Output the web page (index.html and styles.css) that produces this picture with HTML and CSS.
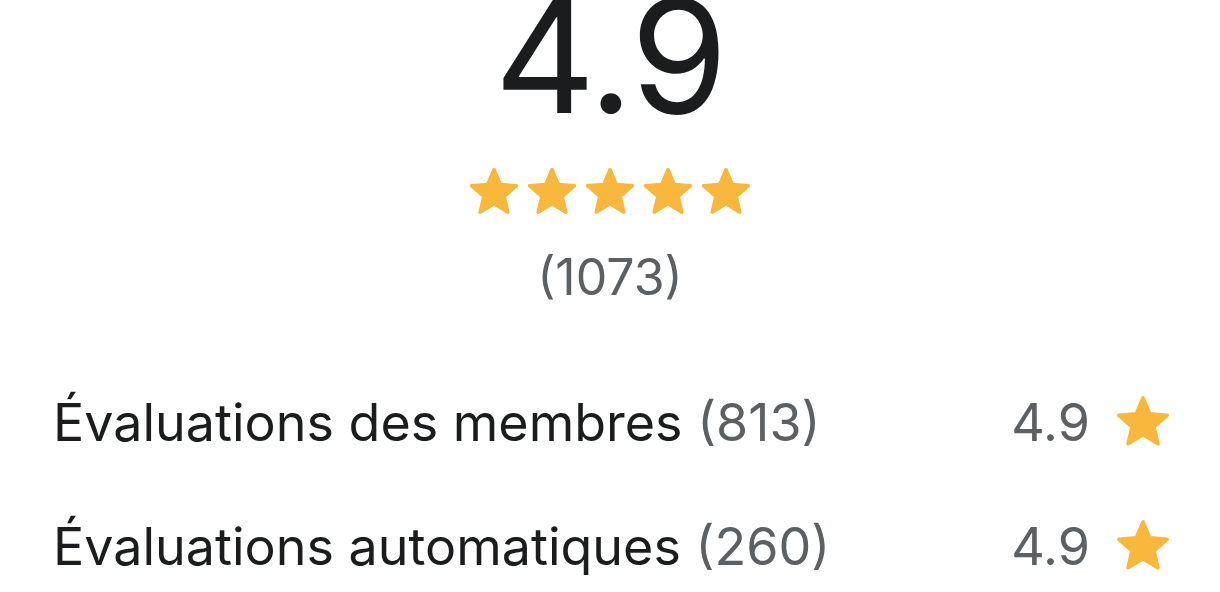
FILE: index.html
```html
<!DOCTYPE html>
<html lang="fr">
<head>
  <meta charset="UTF-8" />
  <meta name="viewport" content="width=device-width, initial-scale=1" />
  <title>Évaluations</title>
  <link rel="stylesheet" href="styles.css">
</head>
<body>

<div class="summary">
  <div class="score">4.9</div>
  <div class="stars">
    <svg class="star" viewBox="0 0 24 24"><path d="M12 17.27L18.18 21l-1.64-7.03L22 9.24l-7.19-.61L12 2 9.19 8.63 2 9.24l5.46 4.73L5.82 21z"/></svg>
    <svg class="star" viewBox="0 0 24 24"><path d="M12 17.27L18.18 21l-1.64-7.03L22 9.24l-7.19-.61L12 2 9.19 8.63 2 9.24l5.46 4.73L5.82 21z"/></svg>
    <svg class="star" viewBox="0 0 24 24"><path d="M12 17.27L18.18 21l-1.64-7.03L22 9.24l-7.19-.61L12 2 9.19 8.63 2 9.24l5.46 4.73L5.82 21z"/></svg>
    <svg class="star" viewBox="0 0 24 24"><path d="M12 17.27L18.18 21l-1.64-7.03L22 9.24l-7.19-.61L12 2 9.19 8.63 2 9.24l5.46 4.73L5.82 21z"/></svg>
    <svg class="star" viewBox="0 0 24 24"><path d="M12 17.27L18.18 21l-1.64-7.03L22 9.24l-7.19-.61L12 2 9.19 8.63 2 9.24l5.46 4.73L5.82 21z"/></svg>
  </div>
  <div class="count">(1073)</div>
</div>

<div class="breakdown">
  <div class="row">
    <span class="label">Évaluations des membres <span class="muted">(813)</span></span>
    <span class="value">4.9
      <svg class="star small" viewBox="0 0 24 24"><path d="M12 17.27L18.18 21l-1.64-7.03L22 9.24l-7.19-.61L12 2 9.19 8.63 2 9.24l5.46 4.73L5.82 21z"/></svg>
    </span>
  </div>
  <div class="row">
    <span class="label">Évaluations automatiques <span class="muted">(260)</span></span>
    <span class="value">4.9
      <svg class="star small" viewBox="0 0 24 24"><path d="M12 17.27L18.18 21l-1.64-7.03L22 9.24l-7.19-.61L12 2 9.19 8.63 2 9.24l5.46 4.73L5.82 21z"/></svg>
    </span>
  </div>
</div>

</body>
</html>
```

FILE: styles.css
```css
body {
  margin: 0;
  background: #fff;
  color: #1b1c1d;
  font-family: Inter, "Noto Sans", sans-serif;
}
.summary {
  display: flex;
  flex-direction: column;
  align-items: center;
}
.score {
  font-size: 157px;
  line-height: 1;
  margin-top: -22px;
  letter-spacing: -2px;
}
.stars {
  display: flex;
  gap: 4px;
  margin-top: 30px;
}
.star {
  width: 54px;
  height: 54px;
  fill: #f7b83d;
  stroke: #f7b83d;
  stroke-width: 1.5;
  stroke-linejoin: round;
}
.count {
  margin-top: 33px;
  font-size: 50px;
  color: #5c6063;
  line-height: 1;
}
.breakdown {
  padding: 58px 52px 0 53px;
}
.row {
  display: flex;
  justify-content: space-between;
  align-items: center;
  font-size: 52px;
  height: 124px;
}
.muted {
  color: #5c6063;
}
.value {
  display: flex;
  align-items: center;
  gap: 24px;
  color: #5c6063;
}
.star.small {
  width: 58px;
  height: 58px;
  margin-right: -4px;
}
```
